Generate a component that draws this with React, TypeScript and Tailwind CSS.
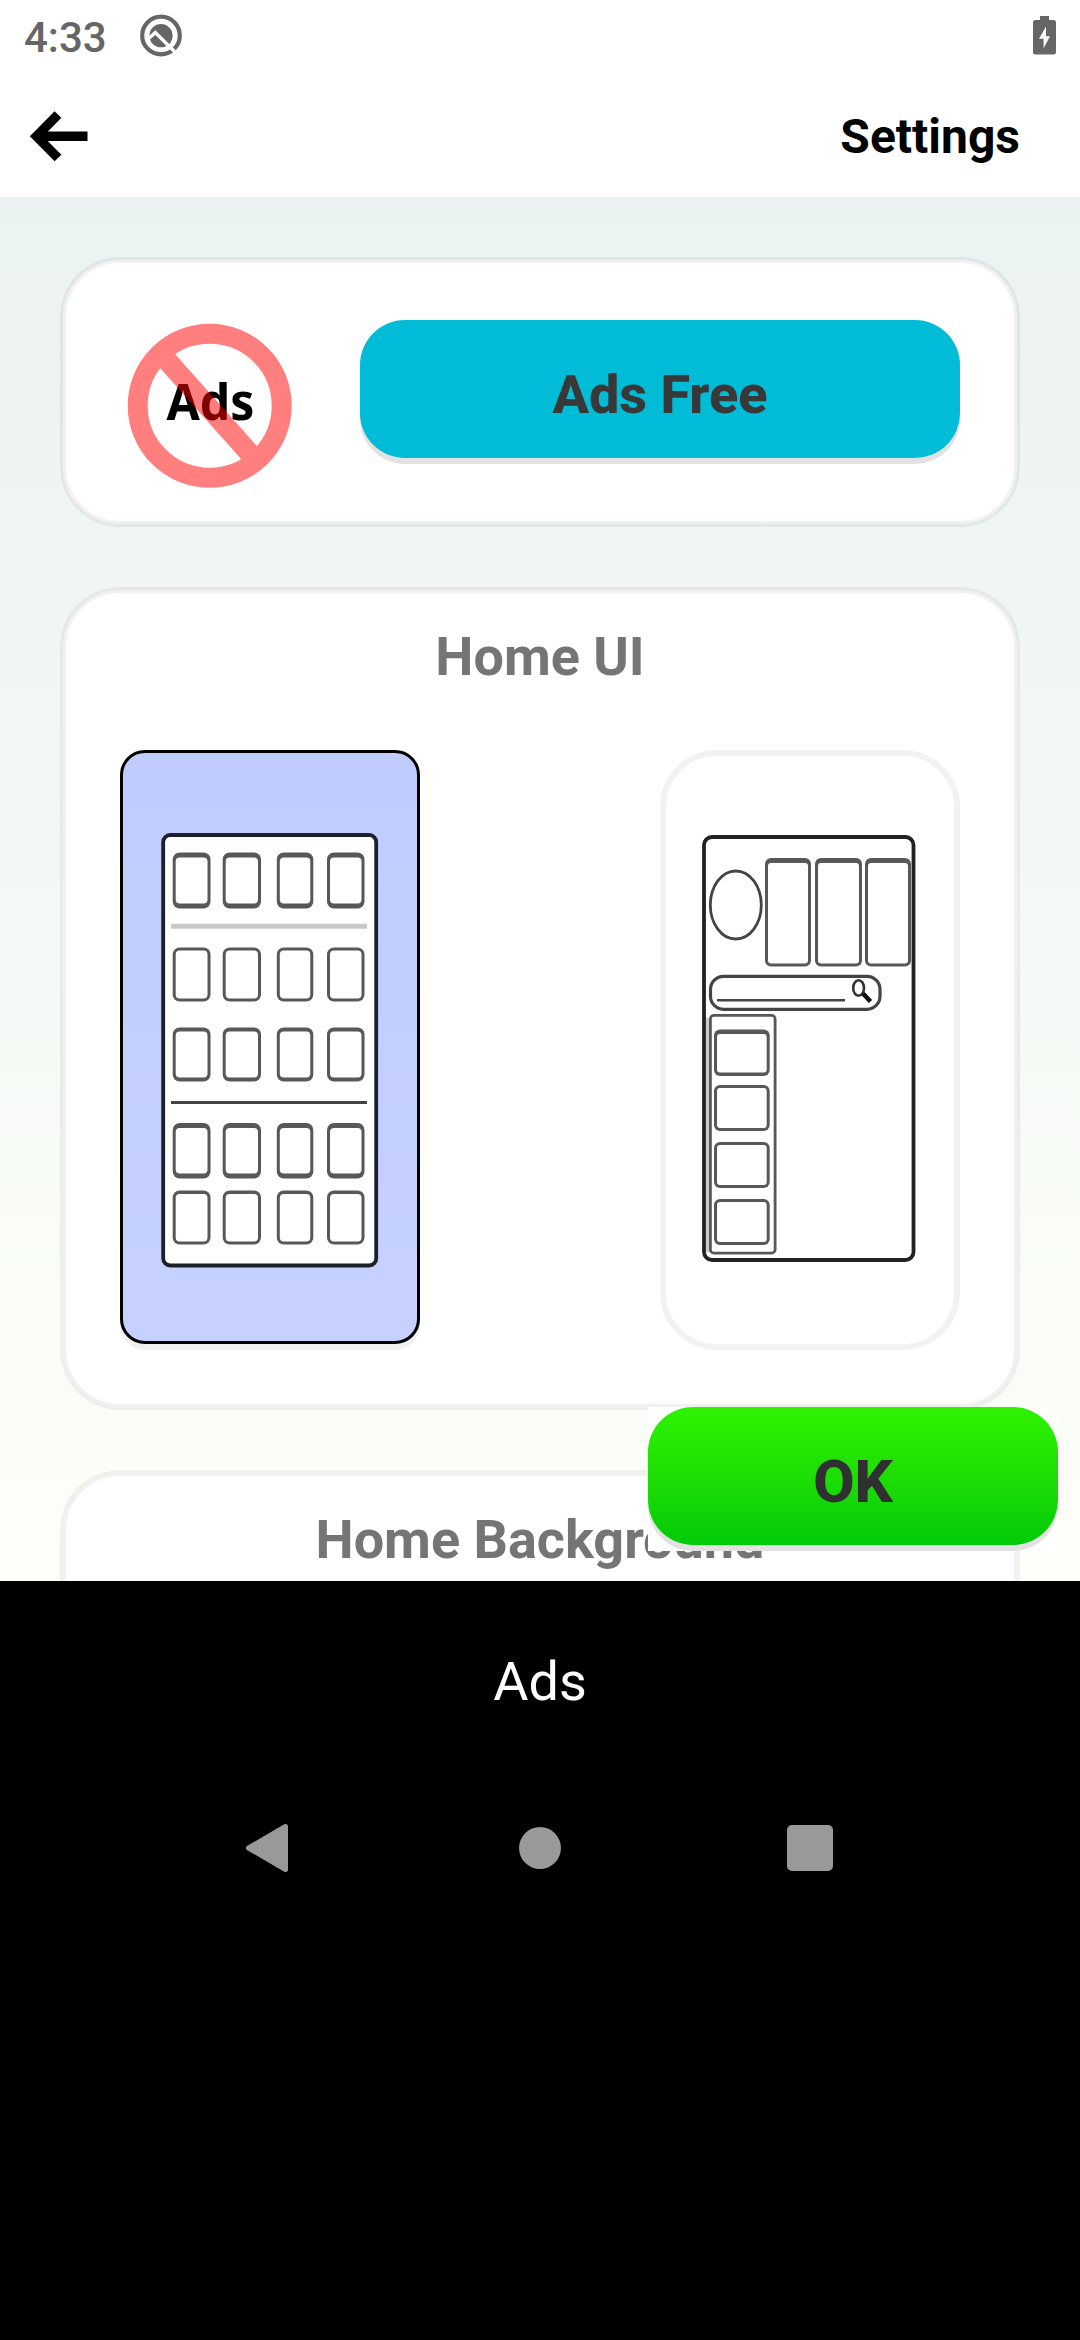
import type { ReactNode } from 'react';

const INK = '#585858';

type BoxProps = {
  x1: number;
  y1: number;
  x2: number;
  y2: number;
  r?: number;
  w?: number;
  top?: number;
  bottom?: number;
  stroke?: string;
};

/* Outlined box given by its outer edges; top and bottom edges may be heavier. */
function Box({ x1, y1, x2, y2, r = 5, w = 3, top = w, bottom = w, stroke = INK }: BoxProps) {
  return (
    <g>
      <rect x={x1} y={y1} width={x2 - x1} height={y2 - y1} rx={r + 1} fill={stroke} />
      <rect x={x1 + w} y={y1 + top} width={x2 - x1 - 2 * w} height={y2 - y1 - top - bottom} rx={r - 2} fill="#fff" />
    </g>
  );
}

const COLUMNS = [
  [172.7, 210.5],
  [222.7, 261],
  [276.8, 313.3],
  [327, 364.5],
];

const ROWS = [
  { y1: 852.5, y2: 908.5, top: 5, bottom: 5 },
  { y1: 947.5, y2: 1001.5, top: 3, bottom: 3 },
  { y1: 1027.5, y2: 1081.5, top: 4, bottom: 4 },
  { y1: 1123, y2: 1178.5, top: 5, bottom: 5 },
  { y1: 1190.5, y2: 1244.5, top: 3.5, bottom: 3 },
];

function GridPreview() {
  return (
    <svg className="block h-[588px] w-[294px]" viewBox="123 753 294 588">
      <rect x="163.2" y="835" width="213" height="430.5" rx="7" fill="#fff" stroke="#1c2028" strokeWidth="3.8" />
      {ROWS.map((row) =>
        COLUMNS.map(([x1, x2]) => <Box key={`${row.y1}-${x1}`} x1={x1} x2={x2} {...row} r={6} />),
      )}
      <path d="M171 926.3H367" stroke="#c9c9c9" strokeWidth="5" />
      <path d="M171 1102.4H367" stroke="#444" strokeWidth="3" />
    </svg>
  );
}

function ListPreview() {
  return (
    <svg className="block h-[588px] w-[288px]" viewBox="666 756 288 588">
      <rect x="704" y="837" width="209.5" height="423" rx="8" fill="#fff" stroke="#222" strokeWidth="3.8" />
      <rect x="706" y="1018" width="4" height="234" fill="#ccc" />
      <ellipse cx="735.8" cy="905" rx="25.5" ry="34" fill="none" stroke="#444" strokeWidth="2.8" />
      <Box x1={765} x2={811} y1={858} y2={966.5} top={5} bottom={3} />
      <Box x1={815} x2={862} y1={858} y2={966.5} top={5} bottom={3} />
      <Box x1={865} x2={911} y1={858} y2={966.5} top={5} bottom={3} />
      <rect x="710.5" y="976.3" width="169.5" height="33" rx="13" fill="none" stroke="#444" strokeWidth="3.2" />
      <path d="M717 1000.3H845" stroke="#444" strokeWidth="2.6" />
      <ellipse cx="858.6" cy="988" rx="5.4" ry="7.8" fill="none" stroke="#333" strokeWidth="2.6" />
      <path d="M863 993.5L870.5 1001.5" stroke="#111" strokeWidth="4.6" />
      <Box x1={709} x2={776.5} y1={1014} y2={1254.5} w={2.8} r={4} />
      <Box x1={714} x2={769.7} y1={1029.5} y2={1076} top={4.5} bottom={3.6} />
      <Box x1={714} x2={769.7} y1={1085} y2={1131} />
      <Box x1={714} x2={769.7} y1={1142} y2={1188} />
      <Box x1={714} x2={769.7} y1={1199} y2={1245} />
    </svg>
  );
}

function NoAdsIcon() {
  return (
    <svg className="mt-[57px] ml-[59px] block h-[170px] w-[170px] shrink-0" viewBox="125 320 170 170">
      <text
        x="166.5"
        y="420"
        fontSize="50"
        fontWeight="700"
        textLength="88"
        lengthAdjust="spacingAndGlyphs"
        className="font-['Noto_Sans']"
      >
        Ads
      </text>
      <g stroke="#ff0000" fill="none" opacity="0.5">
        <circle cx="209.7" cy="405.7" r="72" strokeWidth="20" />
        <path d="M165.3 358.5L251 454.8" strokeWidth="20.5" />
      </g>
    </svg>
  );
}

function Card({ className, children }: { className: string; children: ReactNode }) {
  return (
    <section
      className={`mx-[63px] rounded-[57px] border-[3px] border-[#f1f1f1] bg-white ring-[3px] ring-black/5 ${className}`}
    >
      {children}
    </section>
  );
}

function StatusBar() {
  return (
    <div className="flex h-[72px] items-start">
      <span className="mt-[16px] ml-[24px] w-[115px] text-[42px] leading-[44px] font-medium text-[#666]">4:33</span>
      <svg className="mt-[14px] block h-[44px] w-[44px]" viewBox="139 14 44 44">
        <circle cx="161" cy="35.5" r="18.8" fill="none" stroke="#666" strokeWidth="4.2" />
        <circle cx="161" cy="35.7" r="11.6" fill="#666" />
        <path d="M148 39L155.3 32.6L178 55" fill="none" stroke="#fff" strokeWidth="3.4" />
      </svg>
      <svg className="mt-[16px] mr-[24px] ml-auto block h-[39px] w-[23px]" viewBox="1033 16 23 39">
        <path
          d="M1040 16h9v4h4.5a2.5 2.5 0 0 1 2.5 2.5v29.5a2.5 2.5 0 0 1-2.5 2.5h-18a2.5 2.5 0 0 1-2.5-2.5v-29.5a2.5 2.5 0 0 1 2.5-2.5h4.5z"
          fill="#666"
        />
        <path d="M1046 26.5L1039 38.8h4.6V48.2L1050 36.2h-4z" fill="#fff" />
      </svg>
    </div>
  );
}

function NavBar() {
  return (
    <nav className="mt-[86px] flex h-[96px] items-center justify-between pr-[247px] pl-[243px]">
      <svg className="block h-[52px] w-[50px]" viewBox="0 0 50 52">
        <path d="M5.5 26L42.5 4.5V47.5z" fill="#999" stroke="#999" strokeWidth="5" strokeLinejoin="round" />
      </svg>
      <div className="h-[42px] w-[42px] rounded-full bg-[#999]" />
      <div className="h-[46px] w-[46px] rounded-[5px] bg-[#999]" />
    </nav>
  );
}

export default function App() {
  return (
    <div className="h-[2340px] w-[1080px] overflow-hidden bg-black font-['Roboto',sans-serif]">
      <header className="h-[197px] bg-white">
        <StatusBar />
        <div className="flex h-[125px] items-start justify-between pr-[60px] pl-[28px]">
          <svg className="mt-[36px] block h-[56px] w-[62px]" viewBox="28 108 62 56">
            <path d="M58 114.5L36.5 136.3L58 158" fill="none" stroke="#000" strokeWidth="9.5" />
            <path d="M38 136.3H87.5" stroke="#000" strokeWidth="9.5" />
          </svg>
          <h1 className="mt-[37px] text-[48px] leading-[56px] font-bold text-black">Settings</h1>
        </div>
      </header>

      <main className="relative h-[1384px] overflow-hidden bg-linear-to-b from-[#ebf2f2] to-[#fdfff8] pt-[63px]">
        <Card className="flex h-[264px] items-start pr-[54px]">
          <div className="w-[294px]">
            <NoAdsIcon />
          </div>
          <button className="mt-[57px] block h-[138px] w-[600px] rounded-[45px] bg-[#00bcd7] pt-[12px] text-[54px] leading-[64px] font-extrabold text-[#383838] shadow-[0_6px_0_#e2e2e2]">
            Ads Free
          </button>
        </Card>

        <Card className="mt-[66px] h-[817px] px-[54px] pt-[32px]">
          <h2 className="text-center text-[54px] leading-[64px] font-bold text-[#757575]">Home UI</h2>
          <div className="mt-[61px] flex items-start justify-between">
            <div className="h-[594px] w-[300px] rounded-[25px] border-[3px] border-black bg-linear-to-b from-[#bfccfd] to-[#c6d1ff] shadow-[0_6px_0_#f0f0f0]">
              <GridPreview />
            </div>
            <div className="h-[600px] w-[300px] rounded-[57px] border-[6px] border-[#f2f2f2] bg-white">
              <ListPreview />
            </div>
          </div>
        </Card>

        <Card className="mt-[66px] h-[400px] px-[54px] pt-[32px]">
          <h2 className="text-center text-[54px] leading-[64px] font-bold text-[#757575]">Home Background</h2>
        </Card>

        <div className="absolute top-[1210px] right-[22px] h-[144px] w-[410px] bg-white">
          <button className="block h-[138px] w-[410px] rounded-[45px] bg-linear-to-b from-[#2ff200] to-[#00ca08] pt-[12px] text-[60px] leading-[70px] font-extrabold text-[#303030] shadow-[0_6px_0_#e2e2e2]">
            OK
          </button>
        </div>
      </main>

      <footer>
        <p className="pt-[69px] text-center text-[54px] leading-[64px] text-white">Ads</p>
        <NavBar />
      </footer>
    </div>
  );
}
